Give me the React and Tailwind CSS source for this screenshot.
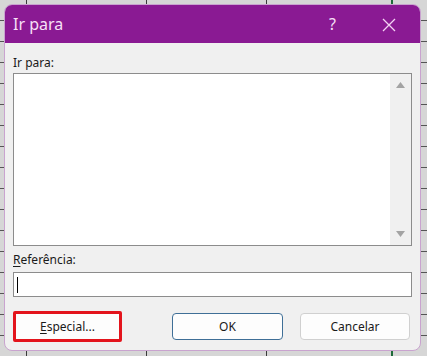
export default function App() {
  const font = { fontFamily: '"Noto Sans", "Open Sans", sans-serif' };
  return (
    <div
      className="w-[427px] h-[356px] pt-[4px] pl-[4px] pr-[6px] pb-[5px] bg-[#d6d6d6] bg-[linear-gradient(to_right,transparent_26px,#3a3a3a_26px,#3a3a3a_27px,transparent_27px,transparent_146px,#3a3a3a_146px,#3a3a3a_147px,transparent_147px,transparent_266px,#3a3a3a_266px,#3a3a3a_267px,transparent_267px,transparent_391px,#1e6b3a_391px,#1e6b3a_393px,transparent_393px),repeating-linear-gradient(to_bottom,#d6d6d6_0px,#d6d6d6_20px,#555_20px,#555_21px)]"
      style={font}
    >
      <div className="w-full h-full flex flex-col rounded-[8px] border border-[#c9a3cf] bg-[#f0f0f0] overflow-hidden">
        <div className="h-[38px] shrink-0 bg-[#8a1a93] flex items-center pl-[8px] pr-[24px] text-[#f7e1f7]">
          <span className="text-[16px] leading-none">Ir para</span>
          <span className="ml-auto mr-[46px] text-[16px] leading-none">?</span>
          <svg width="14" height="14" viewBox="0 0 14 14" className="mt-[1px]">
            <path d="M1 1 L13 13 M13 1 L1 13" stroke="#f3d3f3" strokeWidth="1.3" fill="none" />
          </svg>
        </div>
        <div className="flex flex-col flex-1 px-[8px] pt-[12px]">
          <div className="text-[12px] leading-[16px] text-[#1a1a1a]">Ir para:</div>
          <div className="mt-[2px] h-[173px] border border-[#8c8c8c] bg-white flex">
            <div className="flex-1" />
            <div className="w-[21px] bg-[#f0f0f0] flex flex-col items-center justify-between py-[8px]">
              <svg width="9" height="6" viewBox="0 0 9 6">
                <path d="M0 6 L4.5 0 L9 6 Z" fill="#a3a3a3" />
              </svg>
              <svg width="9" height="6" viewBox="0 0 9 6">
                <path d="M0 0 L4.5 6 L9 0 Z" fill="#a3a3a3" />
              </svg>
            </div>
          </div>
          <div className="mt-[6px] text-[12px] leading-[16px] text-[#1a1a1a]">
            <span className="underline underline-offset-2">R</span>eferência:
          </div>
          <div className="mt-[4px] h-[25px] border border-[#8c8c8c] bg-white flex items-center pl-[3px]">
            <div className="w-[1px] h-[16px] bg-black" />
          </div>
          <div className="mt-[14px] flex items-center">
            <button className="w-[109px] h-[31px] border-[3px] border-[#e3141c] rounded-[2px] bg-[#fdfdfd] text-[12px] text-[#1a1a1a]">
              <span className="underline underline-offset-2">E</span>special...
            </button>
            <button className="ml-[50px] w-[111px] h-[27px] border border-[#3f6f97] rounded-[4px] bg-[#fdfdfd] text-[12px] text-[#1a1a1a]">
              OK
            </button>
            <button className="ml-[17px] w-[110px] h-[27px] border border-[#d0d0d0] rounded-[4px] bg-[#fdfdfd] text-[12px] text-[#1a1a1a]">
              Cancelar
            </button>
          </div>
        </div>
      </div>
    </div>
  );
}
